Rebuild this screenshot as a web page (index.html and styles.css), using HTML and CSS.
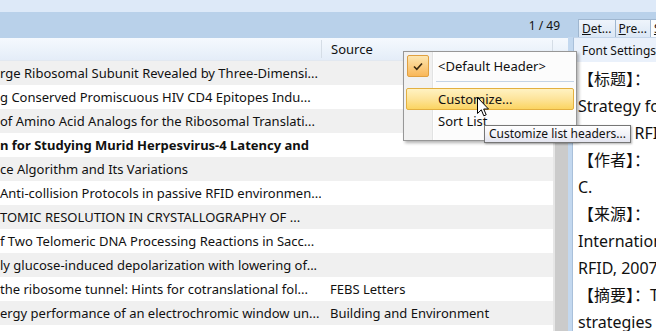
FILE: index.html
```html
<!DOCTYPE html>
<html lang="en">
<head>
  <meta charset="UTF-8" />
  <title>Reference List</title>
  <link rel="stylesheet" href="styles.css">
</head>
<body>
  <div class="top-strip"></div>

  <div class="main">
    <div class="list-pane">
      <div class="count-bar"><span>1 / 49</span></div>

      <div class="list-head">
        <div class="col-title"></div>
        <div class="col-source">Source</div>
        <div class="col-rest"></div>
      </div>

      <div class="list-body">
        <div class="rows">
          <div class="row alt"><div class="col-title">rge Ribosomal Subunit Revealed by Three-Dimensi...</div><div class="col-source"></div></div>
          <div class="row"><div class="col-title">g Conserved Promiscuous HIV CD4 Epitopes Indu...</div><div class="col-source"></div></div>
          <div class="row alt"><div class="col-title">of Amino Acid Analogs for the Ribosomal Translati...</div><div class="col-source"></div></div>
          <div class="row unread"><div class="col-title">n for Studying Murid Herpesvirus-4 Latency and</div><div class="col-source"></div></div>
          <div class="row alt"><div class="col-title">ce Algorithm and Its Variations</div><div class="col-source"></div></div>
          <div class="row"><div class="col-title">Anti-collision Protocols in passive RFID environmen...</div><div class="col-source"></div></div>
          <div class="row alt"><div class="col-title">TOMIC RESOLUTION IN CRYSTALLOGRAPHY OF ...</div><div class="col-source"></div></div>
          <div class="row"><div class="col-title">f Two Telomeric DNA Processing Reactions in Sacc...</div><div class="col-source"></div></div>
          <div class="row alt"><div class="col-title">ly glucose-induced depolarization with lowering of...</div><div class="col-source"></div></div>
          <div class="row"><div class="col-title">the ribosome tunnel: Hints for cotranslational fol...</div><div class="col-source">FEBS Letters</div></div>
          <div class="row alt"><div class="col-title">ergy performance of an electrochromic window un...</div><div class="col-source">Building and Environment</div></div>
          <div class="row"><div class="col-title"></div><div class="col-source"></div></div>
        </div>
        <div class="vscroll"></div>
      </div>
    </div>

    <div class="side-pane">
      <div class="tabs">
        <div class="tab"><u>D</u>et...</div>
        <div class="tab"><u>P</u>re...</div>
        <div class="tab active"><u>S</u>um...</div>
      </div>
      <div class="side-toolbar">Font Settings</div>
      <div class="side-content">
        <div>【标题】：</div>
        <div>Strategy for</div>
        <div>Tags in RFID</div>
        <div>【作者】：</div>
        <div>C.</div>
        <div>【来源】：</div>
        <div>International</div>
        <div>RFID, 2007</div>
        <div>【摘要】：The</div>
        <div>strategies</div>
      </div>
    </div>
  </div>

  <div class="menu">
    <div class="menu-item checked">
      <span class="menu-icon">
        <svg width="10" height="9" viewBox="0 0 10 9"><path d="M1 4.5 L3.8 7.3 L9 1.5" fill="none" stroke="#3a2a10" stroke-width="1.6"/></svg>
      </span>
      <span class="menu-label">&lt;Default Header&gt;</span>
    </div>
    <div class="menu-sep"></div>
    <div class="menu-item hover">
      <span class="menu-icon"></span>
      <span class="menu-label">Customize...</span>
    </div>
    <div class="menu-item">
      <span class="menu-icon"></span>
      <span class="menu-label">Sort List</span>
    </div>
  </div>

  <div class="tooltip">Customize list headers...</div>

  <svg class="cursor" width="13" height="21" viewBox="0 0 13 21">
    <path d="M0.5 0.5 L0.5 16.5 L4.3 12.8 L6.8 18.8 L9.2 17.8 L6.7 12 L11.5 12 Z" fill="#fff" stroke="#000" stroke-width="1"/>
  </svg>
</body>
</html>
```

FILE: styles.css
```css
body {
  margin: 0;
  width: 656px;
  height: 331px;
  overflow: hidden;
  font-family: "Noto Sans", sans-serif;
  font-size: 12px;
  color: #111;
  background: #fff;
}

.top-strip {
  height: 12px;
  background: #dde9f8;
}

.main {
  display: flex;
  height: 319px;
}

.list-pane {
  width: 568px;
  display: flex;
  flex-direction: column;
}

.count-bar {
  flex: none;
  height: 26px;
  background: #b9d1ea;
  display: flex;
  justify-content: flex-end;
  align-items: center;
  padding-right: 8px;
}

.list-head {
  flex: none;
  height: 22px;
  display: flex;
  background: linear-gradient(#f5f9fe, #e4edf8);
  border-bottom: 1px solid #e2e8f0;
}

.list-head .col-source {
  border-left: 1px solid #d5dde6;
  border-right: 1px solid #d5dde6;
  margin: 2px 0;
  display: flex;
  align-items: center;
  font-size: 13px;
}

.col-title {
  width: 321px;
  flex: none;
  white-space: nowrap;
  overflow: hidden;
}

.col-source {
  width: 221px;
  flex: none;
  padding-left: 9px;
  white-space: nowrap;
  overflow: hidden;
}

.col-rest {
  flex: 1;
}

.list-body {
  flex: 1;
  min-height: 0;
  overflow: hidden;
  display: flex;
}

.rows {
  width: 553px;
  flex: none;
}

.row {
  height: 24px;
  display: flex;
  align-items: center;
  font-size: 13px;
  background: #fff;
}

.row.alt {
  background: #f0f0f0;
}

.row.unread {
  font-weight: bold;
}

.vscroll {
  flex: 1;
  background: #cbcbcb;
  border-left: 2px solid #e6e6e6;
}

.side-pane {
  flex: 1;
  display: flex;
  flex-direction: column;
  background: #c3d8ef;
  overflow: hidden;
}

.tabs {
  flex: none;
  height: 25px;
  display: flex;
  align-items: flex-end;
  padding-left: 10px;
  background: #b9d1ea;
}

.tab {
  height: 17px;
  padding: 0 3px;
  border: 1px solid #9fb6cf;
  border-bottom: none;
  background: linear-gradient(#eef4fb, #dbe7f5);
  font-size: 12px;
  line-height: 17px;
  white-space: nowrap;
  margin-right: -1px;
}

.tab.active {
  background: #fbfdff;
}

.side-toolbar {
  flex: none;
  height: 24px;
  margin-left: 5px;
  padding-left: 8px;
  background: #eaf1fb;
  border-left: 1px solid #a9c0da;
  border-top: 1px solid #c5d6ea;
  display: flex;
  align-items: center;
  font-size: 12px;
  white-space: nowrap;
}

.side-content {
  flex: 1;
  min-height: 0;
  overflow: hidden;
  margin-left: 4px;
  padding: 4px 0 0 5px;
  background: #fff;
  border-left: 1px solid #a9c0da;
  font-family: "Noto Sans", "Noto Sans CJK SC", sans-serif;
  font-size: 16px;
  line-height: 27px;
  white-space: nowrap;
  color: #111;
}

.menu {
  position: absolute;
  left: 403px;
  top: 51px;
  width: 168px;
  padding: 2px 2px 8px;
  background: linear-gradient(to right, #f1f1f1 28px, #e2e3e3 28px, #e2e3e3 29px, #fff 29px, #fff 30px, #fcfcfc 30px);
  border: 1px solid #979797;
  box-shadow: 2px 2px 3px rgba(0, 0, 0, 0.3);
}

.menu-item {
  box-sizing: border-box;
  height: 22px;
  display: flex;
  align-items: center;
  border: 1px solid transparent;
  border-radius: 2px;
  font-size: 13px;
}

.menu-item.checked {
  height: 24px;
}

.menu-item.hover {
  border-color: #e3b040;
  background: linear-gradient(#fff2c2, #fde49a 50%, #fbd461);
}

.menu-icon {
  width: 22px;
  height: 22px;
  margin-right: 9px;
  display: flex;
  align-items: center;
  justify-content: center;
  flex: none;
}

.checked .menu-icon {
  border: 1px solid #e0a040;
  border-radius: 2px;
  background: linear-gradient(#fde6b0, #f9b759);
  box-sizing: border-box;
}

.menu-sep {
  height: 1px;
  margin: 3px 0 6px 30px;
  background: #c5d4e6;
}

.tooltip {
  position: absolute;
  left: 484px;
  top: 125px;
  height: 16px;
  padding: 0 4px;
  border: 1px solid #767676;
  background: linear-gradient(#ffffff, #e4e5f0);
  box-shadow: 1px 1px 2px rgba(0, 0, 0, 0.3);
  font-size: 12px;
  line-height: 16px;
  white-space: nowrap;
}

.cursor {
  position: absolute;
  left: 477px;
  top: 97px;
}
```
